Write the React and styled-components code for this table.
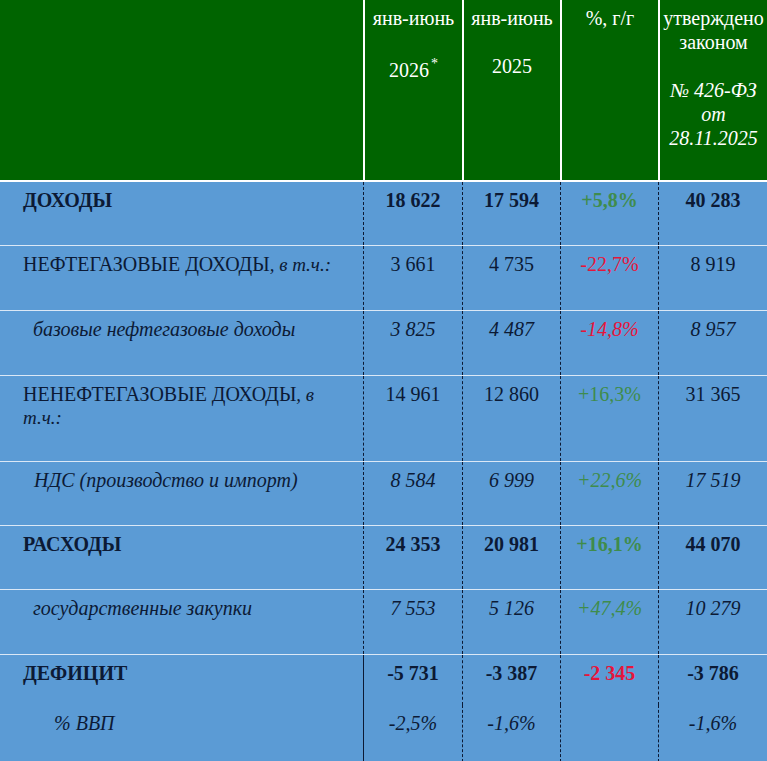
import React from "react";
import styled, { createGlobalStyle } from "styled-components";

const GlobalStyle = createGlobalStyle`
  html, body {
    margin: 0;
    padding: 0;
    background: #5b9bd5;
  }
  *, *::before, *::after {
    box-sizing: border-box;
  }
`;

const rows = [
  {
    label: "ДОХОДЫ",
    kind: "bold",
    values: ["18 622", "17 594", "+5,8%", "40 283"],
    trend: "up",
    height: 64,
  },
  {
    label: "НЕФТЕГАЗОВЫЕ ДОХОДЫ",
    note: ", в т.ч.:",
    kind: "plain",
    values: ["3 661", "4 735", "-22,7%", "8 919"],
    trend: "down",
    height: 65,
  },
  {
    label: "базовые нефтегазовые доходы",
    kind: "italic",
    indent: 33,
    values: ["3 825", "4 487", "-14,8%", "8 957"],
    trend: "down",
    height: 65,
  },
  {
    label: "НЕНЕФТЕГАЗОВЫЕ ДОХОДЫ",
    note: ", в т.ч.:",
    kind: "plain",
    values: ["14 961", "12 860", "+16,3%", "31 365"],
    trend: "up",
    height: 86,
  },
  {
    label: "НДС (производство и импорт)",
    kind: "italic",
    indent: 34,
    values: ["8 584", "6 999", "+22,6%", "17 519"],
    trend: "up",
    height: 64,
  },
  {
    label: "РАСХОДЫ",
    kind: "bold",
    values: ["24 353", "20 981", "+16,1%", "44 070"],
    trend: "up",
    height: 64,
  },
  {
    label: "государственные закупки",
    kind: "italic",
    indent: 33,
    values: ["7 553", "5 126", "+47,4%", "10 279"],
    trend: "up",
    height: 65,
  },
];

function App() {
  return (
    <>
      <GlobalStyle />
      <Sheet>
        <HeadRow>
          <HeadCell />
          <HeadCell>
            янв-июнь
            <YearLine>
              2026<sup>*</sup>
            </YearLine>
          </HeadCell>
          <HeadCell>
            янв-июнь
            <br />
            <br />
            2025
          </HeadCell>
          <HeadCell>%, г/г</HeadCell>
          <HeadCell>
            утверждено
            <br />
            законом
            <br />
            <br />
            <em>
              № 426-ФЗ
              <br />
              от
              <br />
              28.11.2025
            </em>
          </HeadCell>
        </HeadRow>

        {rows.map((row) => (
          <Row key={row.label} $height={row.height}>
            <Label $kind={row.kind} $indent={row.indent}>
              {row.label}
              {row.note && <Note>{row.note}</Note>}
            </Label>
            {row.values.map((value, i) => (
              <Value
                key={i}
                $kind={row.kind}
                $tone={i === 2 ? row.trend : null}
              >
                {value}
              </Value>
            ))}
          </Row>
        ))}

        <Row $height={50} $open>
          <Label $kind="bold">ДЕФИЦИТ</Label>
          <Value $kind="bold" $solid>
            -5 731
          </Value>
          <Value $kind="bold">-3 387</Value>
          <Value $kind="bold" $tone="down">
            -2 345
          </Value>
          <Value $kind="bold">-3 786</Value>
        </Row>
        <Row $height={57} $open>
          <Label $kind="italic" $indent={54}>
            % ВВП
          </Label>
          <Value $kind="italic" $solid>
            -2,5%
          </Value>
          <Value $kind="italic">-1,6%</Value>
          <Value $kind="italic" />
          <Value $kind="italic">-1,6%</Value>
        </Row>
      </Sheet>
    </>
  );
}

export default App;

const serif = `"Liberation Serif", "DejaVu Serif", "Times New Roman", serif`;
const columns = "363px 99px 98px 98px 1fr";

const Sheet = styled.div`
  width: 767px;
  min-height: 761px;
  background: #5b9bd5;
  color: #0c1a35;
  font-family: ${serif};
  overflow: hidden;
`;

const HeadRow = styled.div`
  display: grid;
  grid-template-columns: ${columns};
  height: 182px;
  background: #006400;
  border-bottom: 2px solid #ffffff;
`;

const HeadCell = styled.div`
  border-left: 2px solid #ffffff;
  padding-top: 6px;
  text-align: center;
  color: #ffffff;
  font-family: ${serif};
  font-size: 20px;
  line-height: 24px;
  white-space: nowrap;

  &:first-child {
    border-left: none;
  }

  em {
    font-style: italic;
  }
`;

const YearLine = styled.div`
  margin-top: 28px;

  sup {
    font-size: 14px;
    line-height: 0;
    vertical-align: 9px;
    margin-left: 2px;
  }
`;

const Row = styled.div`
  display: grid;
  grid-template-columns: ${columns};
  height: ${(p) => p.$height}px;
  border-bottom: ${(p) => (p.$open ? "none" : "1px solid #dbe8f6")};
`;

const Label = styled.div`
  padding: 7px 24px 0 ${(p) => p.$indent || 23}px;
  font-family: ${serif};
  font-size: 20px;
  line-height: 23px;
  font-weight: ${(p) => (p.$kind === "bold" ? 700 : 400)};
  font-style: ${(p) => (p.$kind === "italic" ? "italic" : "normal")};
`;

const Note = styled.span`
  font-style: italic;
  font-size: 19px;
`;

const toneColor = {
  up: "#3f8c4c",
  down: "#e5153b",
};

const Value = styled.div`
  border-left: ${(p) => (p.$solid ? "1px solid #0c1a35" : "1px dashed #0c1a35")};
  padding-top: 7px;
  text-align: center;
  font-family: ${serif};
  font-size: 20px;
  line-height: 23px;
  font-weight: ${(p) => (p.$kind === "bold" ? 700 : 400)};
  font-style: ${(p) => (p.$kind === "italic" ? "italic" : "normal")};
  color: ${(p) => (p.$tone ? toneColor[p.$tone] : "inherit")};
`;
